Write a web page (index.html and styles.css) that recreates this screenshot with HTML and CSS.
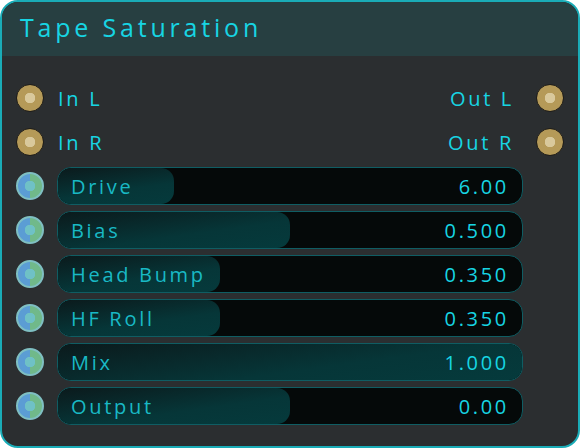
FILE: index.html
```html
<!DOCTYPE html>
<html>
<head>
<meta charset="utf-8">
<link rel="stylesheet" href="styles.css">
</head>
<body>
<div class="panel">
  <div class="header">Tape Saturation</div>
  <div class="rows">
    <div class="row">
      <span class="jack"></span>
      <div class="io"><span>In L</span><span>Out L</span></div>
      <span class="jack"></span>
    </div>
    <div class="row">
      <span class="jack"></span>
      <div class="io"><span>In R</span><span>Out R</span></div>
      <span class="jack"></span>
    </div>
    <div class="row">
      <span class="mod"></span>
      <div class="slider"><div class="fill" style="width:25%"></div><span class="label">Drive</span><span class="value">6.00</span></div>
    </div>
    <div class="row">
      <span class="mod"></span>
      <div class="slider"><div class="fill" style="width:50%"></div><span class="label">Bias</span><span class="value">0.500</span></div>
    </div>
    <div class="row">
      <span class="mod"></span>
      <div class="slider"><div class="fill" style="width:35%"></div><span class="label">Head Bump</span><span class="value">0.350</span></div>
    </div>
    <div class="row">
      <span class="mod"></span>
      <div class="slider"><div class="fill" style="width:35%"></div><span class="label">HF Roll</span><span class="value">0.350</span></div>
    </div>
    <div class="row">
      <span class="mod"></span>
      <div class="slider"><div class="fill" style="width:100%"></div><span class="label">Mix</span><span class="value">1.000</span></div>
    </div>
    <div class="row">
      <span class="mod"></span>
      <div class="slider"><div class="fill" style="width:50%"></div><span class="label">Output</span><span class="value">0.00</span></div>
    </div>
  </div>
</div>
</body>
</html>
```
FILE: styles.css
```css
html, body {
  margin: 0;
  padding: 0;
  background: #ffffff;
}
body {
  font-family: "Open Sans", "DejaVu Sans", sans-serif;
}
.panel {
  width: 580px;
  height: 448px;
  box-sizing: border-box;
  border: 2px solid #1aacb7;
  border-radius: 18px;
  background: #2b2e30;
  overflow: hidden;
}
.header {
  height: 54px;
  background: #273f41;
  color: #17d5e3;
  font-size: 25px;
  letter-spacing: 3.8px;
  line-height: 50px;
  padding-left: 18px;
  padding-bottom: 4px;
  box-sizing: border-box;
  height: 54px;
}
.rows {
  padding: 20px 14px 0 14px;
}
.row {
  height: 44px;
  display: grid;
  grid-template-columns: 28px 1fr 28px;
  column-gap: 13px;
  align-items: center;
}
.jack {
  width: 28px;
  height: 28px;
  box-sizing: border-box;
  border-radius: 50%;
  background: radial-gradient(circle, #d9c99c 0 5px, #b59a58 5.5px);
  border: 1.5px solid #1f1d18;
}
.mod {
  width: 28px;
  height: 28px;
  box-sizing: border-box;
  border-radius: 50%;
  border: 2px solid #7fbfc2;
  background:
    radial-gradient(circle, #6fc1c6 0 5px, transparent 5.5px),
    linear-gradient(to right, #5b9dd4 50%, #70b98a 50%);
}
.io {
  display: flex;
  justify-content: space-between;
  color: #17d5e3;
  font-size: 20px;
  letter-spacing: 2.7px;
  padding: 0 9px 0 1px;
}
.slider {
  position: relative;
  height: 38px;
  box-sizing: border-box;
  border: 1px solid #0f5d63;
  border-radius: 14px;
  background: #050909;
  display: flex;
  align-items: center;
  justify-content: space-between;
  padding: 0 13px 0 13px;
  overflow: hidden;
}
.fill {
  position: absolute;
  left: 0;
  top: 0;
  bottom: 0;
  border-radius: 13px;
  background: linear-gradient(172deg, #0b1a1c 0%, #063638 60%, #053a3c 100%);
}
.label, .value {
  position: relative;
  font-size: 20px;
  letter-spacing: 2.7px;
}
.label {
  color: #19b9c5;
}
.value {
  color: #17d5e3;
}
```
